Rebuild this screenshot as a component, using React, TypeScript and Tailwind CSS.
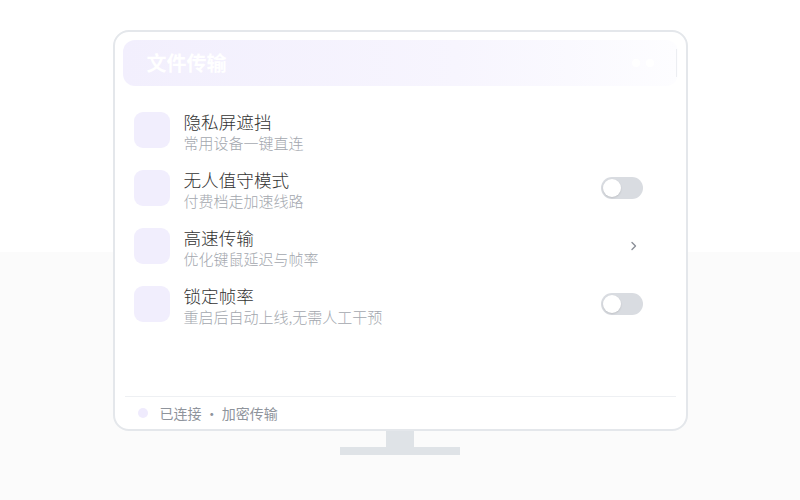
const rows = [
    { title: "隐私屏遮挡", sub: "常用设备一键直连", right: "none" },
    { title: "无人值守模式", sub: "付费档走加速线路", right: "toggle" },
    { title: "高速传输", sub: "优化键鼠延迟与帧率", right: "chevron" },
    { title: "锁定帧率", sub: "重启后自动上线,无需人工干预", right: "toggle" },
]

function Toggle() {
    return (
        <span className="w-[42px] h-[22px] rounded-full bg-[#d9dce1] flex items-center px-[2px]">
            <span className="w-[18px] h-[18px] rounded-full bg-white shadow-[0_1px_2px_rgba(0,0,0,0.12)]"></span>
        </span>
    )
}

export default function App() {
    return (
        <div
            className="w-[800px] h-[500px] flex flex-col items-center pt-[30px] bg-[linear-gradient(to_bottom,#ffffff_50.4%,#fbfbfb_50.4%)]"
            style={{ fontFamily: '"Noto Sans CJK SC", "Noto Sans", sans-serif' }}
        >
            {/* monitor */}
            <div className="w-[575px] h-[401px] border-2 border-[#e4e7eb] rounded-[16px] bg-white flex flex-col pt-[8px] px-[8px]">
                <div className="h-[46px] rounded-[12px] bg-[linear-gradient(to_right,#f2effd,#f7f5fe_60%,#fdfdff)] flex items-center pl-[24px] pr-[1px]">
                    <span className="text-[20px] font-bold text-white leading-none">文件传输</span>
                    <div className="ml-auto flex items-center gap-[6px]">
                        <span className="w-[8px] h-[8px] rounded-full bg-white"></span>
                        <span className="w-[8px] h-[8px] rounded-full bg-white"></span>
                        <span className="w-px h-[28px] bg-[#eceef2] ml-[16px]"></span>
                    </div>
                </div>

                <div className="flex flex-col gap-[22px] pt-[26px] pl-[11px] pr-[35px]">
                    {rows.map((r) => (
                        <div key={r.title} className="flex items-start h-[36px]">
                            <span className="w-[36px] h-[36px] rounded-[9px] bg-[#f1eefd] shrink-0"></span>
                            <div className="flex flex-col ml-[14px] -mt-[2px]">
                                <span className="text-[17.6px] leading-[23px] font-light text-[#333333]">{r.title}</span>
                                <span className="text-[15px] leading-[20px] font-light text-[#a3a7ae] whitespace-nowrap">{r.sub}</span>
                            </div>
                            <div className="ml-auto self-center">
                                {r.right === "toggle" && <Toggle />}
                                {r.right === "chevron" && (
                                    <svg width="14" height="14" viewBox="0 0 14 14" className="mr-[2px]">
                                        <path d="M5 3.5 L8.5 7 L5 10.5" fill="none" stroke="#8a8f98" strokeWidth="1.4" strokeLinecap="round" strokeLinejoin="round" />
                                    </svg>
                                )}
                            </div>
                        </div>
                    ))}
                </div>

                <div className="mt-auto mx-[2px] border-t border-[#eef0f3] h-[33px] flex items-center pl-[13px]">
                    <span className="w-[10px] h-[10px] rounded-full bg-[#efebfd]"></span>
                    <span className="ml-[12px] text-[14px] text-[#8f949c]">已连接 · 加密传输</span>
                </div>
            </div>
            {/* stand */}
            <div className="w-[28px] h-[16px] bg-[#dfe3e7]"></div>
            <div className="w-[120px] h-[8px] bg-[#dfe3e7]"></div>
        </div>
    )
}
